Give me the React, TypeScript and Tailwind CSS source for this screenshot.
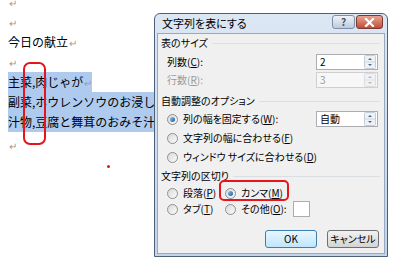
import React from 'react';

const Mark = () => <span className="ml-[1px] text-[10px] text-[#9a9a9a]">↵</span>;

const Radio = ({ checked = false }: { checked?: boolean }) => (
  <span className="flex h-[11px] w-[11px] shrink-0 items-center justify-center rounded-full border border-[#8e8f8f] bg-gradient-to-br from-[#d9d9d9] to-[#fbfbfb]">
    {checked && <span className="h-[5px] w-[5px] rounded-full bg-gradient-to-br from-[#8ec4ec] to-[#1c5a9c]" />}
  </span>
);

const Spin = ({ value, disabled = false }: { value: string; disabled?: boolean }) => (
  <div
    className={
      disabled
        ? 'flex h-[16px] w-[62px] items-center border border-[#cfcfcf] bg-[#f7f7f7] text-[#9a9a9a]'
        : 'flex h-[16px] w-[62px] items-center border border-[#abadb3] bg-white text-black'
    }
  >
    <span className="flex-1 pl-[3px]">{value}</span>
    <svg width="12" height="14" viewBox="0 0 12 14" className="mr-[1px]">
      <rect x="0.5" y="0.5" width="11" height="13" rx="1" fill="#eef1f5" stroke={disabled ? '#dcdcdc' : '#c4ccd6'} />
      <line x1="1" y1="7" x2="11" y2="7" stroke={disabled ? '#e2e2e2' : '#cfd6df'} />
      <path d="M4 5 L6 3 L8 5 Z" fill={disabled ? '#b8b8b8' : '#4d6a8c'} />
      <path d="M4 9 L6 11 L8 9 Z" fill={disabled ? '#b8b8b8' : '#4d6a8c'} />
    </svg>
  </div>
);

const Group = ({ label }: { label: string }) => (
  <div className="flex h-[14px] items-center gap-[4px] pl-[3px] pr-[4px]">
    <span>{label}</span>
    <span className="h-px flex-1 bg-[#dadfe4]" />
  </div>
);

const Document = () => (
  <div className="-mt-[8px] pl-[8px] text-[12px] leading-[20px] text-black">
    <div className="h-[20px]"><Mark /></div>
    <div className="h-[20px]"><Mark /></div>
    <div className="h-[20px]">今日の献立<Mark /></div>
    <div className="h-[20px]"><Mark /></div>
    <div className="h-[20px] whitespace-nowrap">
      <span className="inline-block h-[20px] bg-[#aecbef]">主菜,肉じゃが<Mark /></span>
    </div>
    <div className="h-[20px] w-[170px] whitespace-nowrap bg-[#aecbef]">副菜,ホウレンソウのお浸し<Mark /></div>
    <div className="h-[20px] w-[170px] whitespace-nowrap bg-[#aecbef]">汁物,豆腐と舞茸のおみそ汁<Mark /></div>
    <div className="mt-[3px] h-[20px]"><Mark /></div>
  </div>
);

const Dialog = () => (
  <div className="absolute left-[154px] top-[13px] flex h-[244px] w-[234px] flex-col rounded-t-[6px] border border-[#4e6079] bg-gradient-to-b from-[#dce7f4] to-[#c3d4e9] px-[2px] pb-[2px] text-[10px] leading-none [font-feature-settings:'palt']">
    {/* title bar */}
    <div className="flex h-[19px] items-start justify-between">
      <span className="flex h-[19px] items-center pl-[5px] text-[11px] text-black">文字列を表にする</span>
      <div className="flex gap-[1px] pr-[2px] pt-[1px]">
        <div className="flex h-[14px] w-[23px] items-center justify-center rounded-[3px] border border-[#7d8ea6] bg-gradient-to-b from-[#eef3f9] to-[#bccbdf] text-[10px] font-bold text-[#4a5566]">
          ?
        </div>
        <div className="flex h-[14px] w-[27px] items-center justify-center rounded-[3px] border border-[#7a3b33] bg-gradient-to-b from-[#e8a493] to-[#c24b34]">
          <svg width="11" height="9" viewBox="0 0 11 9">
            <path d="M2 1 L9 8 M9 1 L2 8" stroke="#ffffff" strokeWidth="2.2" strokeLinecap="square" />
          </svg>
        </div>
      </div>
    </div>

    {/* body */}
    <div className="flex flex-1 flex-col border border-[#98a9bf] bg-[#f0f0f0] text-black">
      <div className="mt-[2px]"><Group label="表のサイズ" /></div>

      <div className="mt-[4px] flex h-[16px] items-center justify-between pl-[9px] pr-[6px]">
        <span>列数(<u>C</u>):</span>
        <Spin value="2" />
      </div>
      <div className="mt-[2px] flex h-[16px] items-center justify-between pl-[9px] pr-[6px] text-[#9a9a9a]">
        <span>行数(<u>R</u>):</span>
        <Spin value="3" disabled />
      </div>

      <div className="mt-[6px]"><Group label="自動調整のオプション" /></div>

      <div className="mt-[3px] flex h-[16px] items-center justify-between pl-[9px] pr-[6px]">
        <span className="flex items-center gap-[5px]">
          <Radio checked />
          <span>列の幅を固定する(<u>W</u>):</span>
        </span>
        <Spin value="自動" />
      </div>
      <div className="mt-[3px] flex h-[16px] items-center gap-[5px] pl-[9px]">
        <Radio />
        <span>文字列の幅に合わせる(<u>F</u>)</span>
      </div>
      <div className="mt-[3px] flex h-[16px] items-center gap-[5px] pl-[9px]">
        <Radio />
        <span>ウィンドウ サイズに合わせる(<u>D</u>)</span>
      </div>

      <div className="mt-[4px]"><Group label="文字列の区切り" /></div>

      <div className="mt-[2px] grid grid-cols-[58px_1fr] pl-[9px]">
        <div className="flex h-[16px] items-center gap-[5px]">
          <Radio />
          <span>段落(<u>P</u>)</span>
        </div>
        <div className="flex h-[16px] items-center gap-[5px]">
          <Radio checked />
          <span>カンマ(<u>M</u>)</span>
        </div>
        <div className="flex h-[16px] items-center gap-[5px]">
          <Radio />
          <span>タブ(<u>T</u>)</span>
        </div>
        <div className="flex h-[16px] items-center gap-[5px]">
          <Radio />
          <span>その他(<u>O</u>):</span>
          <span className="ml-[1px] h-[16px] w-[17px] border border-[#abadb3] bg-white" />
        </div>
      </div>

      <div className="mt-[13px] flex justify-end gap-[10px] pr-[5px]">
        <button className="flex h-[18px] w-[52px] items-center justify-center rounded-[3px] border border-[#3c7fb1] bg-gradient-to-b from-[#eaf6fd] to-[#bee6fd] text-[10px]">
          OK
        </button>
        <button className="flex h-[18px] w-[52px] items-center justify-center rounded-[3px] border border-[#707070] bg-gradient-to-b from-[#f2f2f2] to-[#d4d4d4] text-[10px]">
          キャンセル
        </button>
      </div>
    </div>
  </div>
);

export default function App() {
  return (
    <div className="relative h-[259px] w-[400px] overflow-hidden bg-white font-['Noto_Sans_CJK_JP',sans-serif]">
      <Document />
      <Dialog />
      {/* red annotations */}
      <div className="absolute left-[23px] top-[62px] h-[83px] w-[23px] rounded-[7px] border-2 border-[#e8141c]" />
      <div className="absolute left-[219px] top-[180px] h-[21px] w-[70px] rounded-[5px] border-2 border-[#e8141c]" />
      <div className="absolute left-[107px] top-[165px] h-[3px] w-[3px] rounded-full bg-[#e8141c]" />
    </div>
  );
}
